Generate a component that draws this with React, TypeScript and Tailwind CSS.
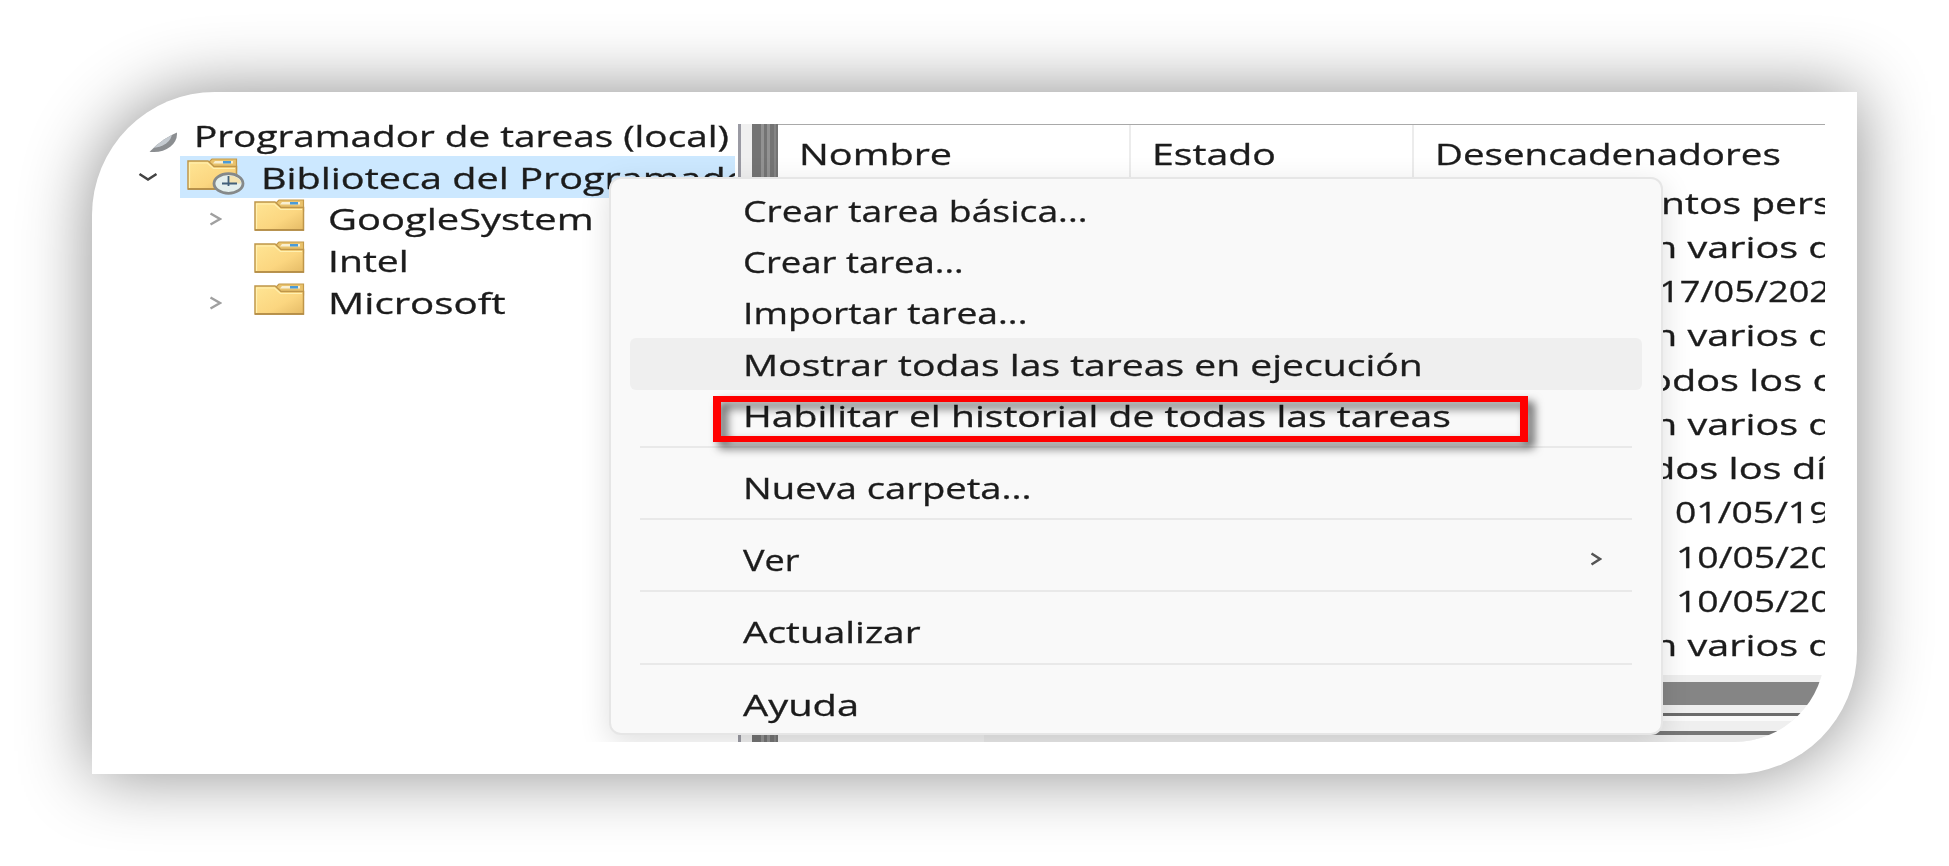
import { useLayoutEffect, useRef, useState, type ReactNode } from "react";

function Label({ w, children }: { w?: number; children: ReactNode }) {
  const ref = useRef<HTMLSpanElement>(null);
  const [scale, setScale] = useState(1.2);
  useLayoutEffect(() => {
    if (ref.current && w) setScale(w / ref.current.offsetWidth);
  }, [w]);
  return (
    <span
      ref={ref}
      className="inline-block shrink-0 origin-left whitespace-pre"
      style={{ transform: `scaleX(${scale})` }}
    >
      {children}
    </span>
  );
}

function Folder({ clock = false }: { clock?: boolean }) {
  return (
    <svg className="shrink-0" width="58" height="38" viewBox="0 0 58 38">
      <defs>
        <linearGradient id="folderFront" x1="0" y1="0" x2="1" y2="1">
          <stop offset="0" stopColor="#ffe594" />
          <stop offset="0.6" stopColor="#fbd680" />
          <stop offset="1" stopColor="#e5bb66" />
        </linearGradient>
      </defs>
      <path d="M21 5 25 1H49.5V12H25Z" fill="#e9c26c" stroke="#c49a4a" strokeWidth="1.2" />
      <path d="M28 3H46V5.5H26Z" fill="#f8efd2" />
      <path d="M36 3H44V5.5H36Z" fill="#4a9bd8" />
      <path d="M1 3H21L27 8.5H49.5V31H1Z" fill="url(#folderFront)" stroke="#bf964a" strokeWidth="1.5" />
      <path d="M2.5 30V5H20.5L26.5 10.5H48" fill="none" stroke="#fff0b0" strokeWidth="1.2" />
      <path d="M1 31H50" fill="none" stroke="#b08a44" strokeWidth="1.5" />
      {clock && (
        <g>
          <ellipse cx="41.5" cy="25.5" rx="14.5" ry="9.8" fill="#e3efee" stroke="#85898a" strokeWidth="2.8" />
          <path d="M41.5 25.5V17.5A12.5 8 0 0 1 54 25.5Z" fill="#f3e3b1" />
          <path d="M41.5 18V28M35 25.5H50" stroke="#426079" strokeWidth="1.8" fill="none" />
        </g>
      )}
    </svg>
  );
}

function Chevron({ down = false }: { down?: boolean }) {
  return down ? (
    <svg width="20" height="10" viewBox="0 0 20 10">
      <path d="M1.5 2 10 7.5 18.5 2" fill="none" stroke="#444" strokeWidth="2.6" />
    </svg>
  ) : (
    <svg width="13" height="14" viewBox="0 0 13 14">
      <path d="M1.5 1.5 11 7 1.5 12.5" fill="none" stroke="#a0a0a0" strokeWidth="2.4" />
    </svg>
  );
}

function TreeChild({ label, w, expandable }: { label: string; w: number; expandable?: boolean }) {
  return (
    <div className="flex h-[41.8px] items-center">
      <div className="flex w-[130px] shrink-0 justify-end pt-[2px] pr-8">{expandable && <Chevron />}</div>
      <Folder />
      <div className="pt-px pl-[16px]">
        <Label w={w}>{label}</Label>
      </div>
    </div>
  );
}

function Tree() {
  return (
    <div className="flex w-[614px] shrink-0 flex-col overflow-hidden">
      <div className="-mt-[10px] flex h-[41.8px] shrink-0 items-center pl-2">
        <svg className="mr-[16px] shrink-0" width="46" height="36" viewBox="0 0 46 36">
          <ellipse cx="22" cy="17" rx="23" ry="18" fill="#8b8e91" />
          <ellipse cx="20" cy="16" rx="20" ry="15" fill="#c5cbd1" />
        </svg>
        <div className="pt-[3px]">
          <Label w={535}>Programador de tareas (local)</Label>
        </div>
      </div>
      <div className="flex h-[41.8px] shrink-0 items-center">
        <div className="flex w-14 shrink-0 justify-start pt-px pl-[14px]">
          <Chevron down />
        </div>
        <div className="flex h-full w-[555px] items-center overflow-hidden bg-[#cce8ff] pl-[7px]">
          <Folder clock />
          <div className="pt-[2px] pl-[16px]">
            <Label w={488}>Biblioteca del Programado</Label>
          </div>
        </div>
      </div>
      <TreeChild label="GoogleSystem" w={266} expandable />
      <TreeChild label="Intel" w={81} />
      <TreeChild label="Microsoft" w={178} expandable />
    </div>
  );
}

const rows: { text: string; pad: string; w: number }[] = [
  { text: "ntos pers", pad: "pl-[883px]", w: 170 },
  { text: "n varios d", pad: "pl-[875px]", w: 179 },
  { text: "17/05/202", pad: "pl-[881px]", w: 171 },
  { text: "n varios d", pad: "pl-[875px]", w: 179 },
  { text: "odos los d", pad: "pl-[870px]", w: 188 },
  { text: "n varios d", pad: "pl-[875px]", w: 179 },
  { text: "dos los dí", pad: "pl-[873px]", w: 176 },
  { text: "01/05/19", pad: "pl-[897px]", w: 156 },
  { text: "10/05/20", pad: "pl-[898px]", w: 156 },
  { text: "10/05/20", pad: "pl-[898px]", w: 156 },
  { text: "n varios d", pad: "pl-[875px]", w: 179 },
];

function TaskList() {
  return (
    <div className="flex min-w-0 flex-1 flex-col overflow-hidden">
      <div className="flex h-[56px] shrink-0 items-center border-t border-[#a9a9a9]">
        <div className="flex h-full w-[353px] shrink-0 items-center border-r-2 border-[#ececec] pt-[2px] pl-[21px]">
          <Label w={153}>Nombre</Label>
        </div>
        <div className="flex h-full w-[283px] shrink-0 items-center border-r-2 border-[#ececec] pt-[2px] pl-[21px]">
          <Label w={124}>Estado</Label>
        </div>
        <div className="pt-[2px] pl-[21px]">
          <Label w={346}>Desencadenadores</Label>
        </div>
      </div>
      <div className="flex h-[495px] shrink-0 flex-col pt-[0.4px]">
        {rows.map((r, i) => (
          <div key={i} className={`flex h-[44.27px] shrink-0 items-center ${r.pad}`}>
            <Label w={r.w}>{r.text}</Label>
          </div>
        ))}
      </div>
      <div className="flex flex-1 flex-col bg-[#efefef] pt-[7px]">
        <div className="h-[23px] bg-[#858585]" />
        <div className="mt-[8px] h-[3px] bg-[#6b6b6b]" />
        <div className="h-[5px] bg-[#fafafa]" />
        <div className="mt-[10px] h-[4px] bg-[#777777]" />
        <div className="flex flex-1 bg-[#e9e9e9]">
          <div className="w-[206px] bg-[#f0f0f0]" />
        </div>
      </div>
    </div>
  );
}

function Item({ label, w, hover, sub }: { label: string; w: number; hover?: boolean; sub?: boolean }) {
  return (
    <div
      className={`mx-[19px] flex h-[51.3px] shrink-0 items-center justify-between rounded-md pr-[40px] pl-[113px] ${hover ? "bg-[#efefef]" : ""}`}
    >
      <div className="pt-px">
        <Label w={w}>{label}</Label>
      </div>
      {sub && (
        <svg className="-mt-px" width="12" height="14" viewBox="0 0 12 14">
          <path d="M1.5 1.5 10 7 1.5 12.5" fill="none" stroke="#555" strokeWidth="2.5" />
        </svg>
      )}
    </div>
  );
}

function Separator() {
  return (
    <div className="flex h-[20.9px] shrink-0 items-start px-[29px] pt-[5px]">
      <div className="h-[2px] flex-1 bg-[#e9e9e9]" />
    </div>
  );
}

function ContextMenu() {
  return (
    <div className="absolute top-[53px] left-[485px] flex h-[558px] w-[1054px] flex-col rounded-[12px] border-2 border-[#e6e6e6] bg-[#f9f9f9] pt-[5.6px] shadow-[0_8px_30px_rgba(0,0,0,0.13)]">
      <Item label="Crear tarea básica..." w={344} />
      <Item label="Crear tarea..." w={220} />
      <Item label="Importar tarea..." w={285} />
      <Item label="Mostrar todas las tareas en ejecución" w={680} hover />
      <Item label="Habilitar el historial de todas las tareas" w={708} />
      <Separator />
      <Item label="Nueva carpeta..." w={288} />
      <Separator />
      <Item label="Ver" w={57} sub />
      <Separator />
      <Item label="Actualizar" w={177} />
      <Separator />
      <Item label="Ayuda" w={116} />
      <div className="absolute top-[217px] left-[102px] h-[46px] w-[815px] border-x-8 border-y-[6px] border-[#ff0000] drop-shadow-[6px_6px_5px_rgba(0,0,0,0.65)]" />
    </div>
  );
}

export default function App() {
  return (
    <div className="h-[866px] w-[1949px] overflow-hidden bg-white pt-[92px] pl-[92px] font-['Open_Sans','Noto_Sans',sans-serif] text-[28.5px] leading-[40px] text-[#1c1c1c] [-webkit-text-stroke:0.3px_#1c1c1c]">
      <div className="h-[682px] w-[1765px] rounded-tl-[123px] rounded-br-[123px] bg-white p-8 shadow-[0_0_70px_rgba(0,0,0,0.45)]">
        <div className="relative flex h-[618px] w-[1701px] overflow-hidden rounded-tl-[91px] rounded-br-[91px]">
          <Tree />
          <div className="h-full w-[3px] shrink-0 bg-[#9a9aa3]" />
          <div className="h-full w-[11px] shrink-0 bg-[#f0f0f0]" />
          <div className="flex h-full w-[26px] shrink-0 bg-[#747474]">
            <div className="ml-[9px] w-[3px] bg-[#929292]" />
            <div className="ml-[3px] w-[3px] bg-[#929292]" />
            <div className="ml-[4px] w-[2px] bg-[#858585]" />
          </div>
          <TaskList />
          <ContextMenu />
        </div>
      </div>
    </div>
  );
}
